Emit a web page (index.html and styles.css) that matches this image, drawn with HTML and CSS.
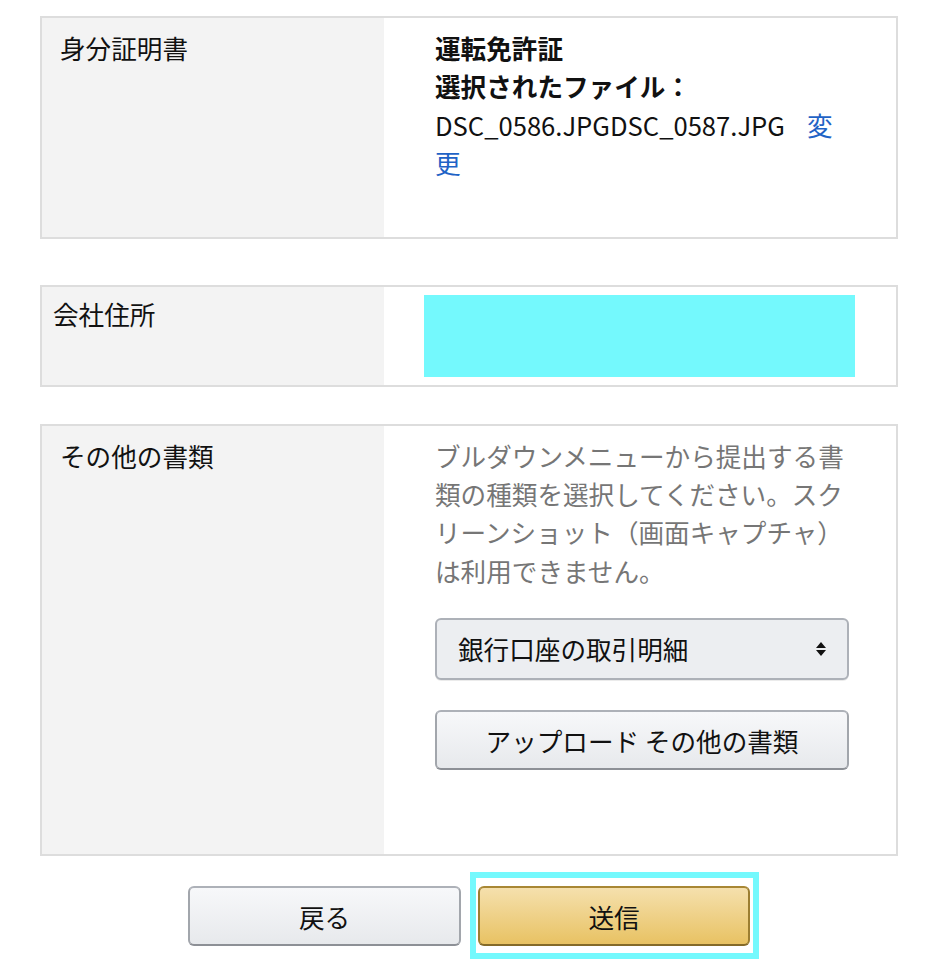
FILE: index.html
```html
<!DOCTYPE html>
<html lang="ja">
<head>
    <meta charset="UTF-8">
    <title>書類の提出</title>
    <link rel="stylesheet" href="styles.css">
</head>
<body>
    <div class="page">
        <div class="panel">
            <div class="label">身分証明書</div>
            <div class="value value-id">
                <div class="strong">運転免許証</div>
                <div class="strong">選択されたファイル：</div>
                <div>DSC_0586.JPGDSC_0587.JPG<a href="#" class="change">変更</a></div>
            </div>
        </div>

        <div class="panel panel-address">
            <div class="label label-tight">会社住所</div>
            <div class="value value-address">
                <div class="redacted"></div>
            </div>
        </div>

        <div class="panel panel-other">
            <div class="label">その他の書類</div>
            <div class="value value-other">
                <p class="help">ブルダウンメニューから提出する書類の種類を選択してください。スクリーンショット（画面キャプチャ）は利用できません。</p>
                <div class="select">
                    <span>銀行口座の取引明細</span>
                    <svg class="arrows" width="12" height="16" viewBox="0 0 12 16">
                        <path d="M6 1 L11 7 H1 Z M6 15 L11 9 H1 Z" fill="#111"/>
                    </svg>
                </div>
                <button class="btn upload">アップロード その他の書類</button>
            </div>
        </div>

        <div class="actions">
            <button class="btn back">戻る</button>
            <span class="marked">
                <button class="btn submit">送信</button>
            </span>
        </div>
    </div>
</body>
</html>
```

FILE: styles.css
```css
body {
    margin: 0;
    font-family: "Noto Sans CJK JP", "Noto Sans", sans-serif;
    font-size: 25.6px;
    line-height: 1.5;
    color: #111;
    background-color: #fff;
}

.page {
    margin: 16px 32px 0 40px;
    padding-bottom: 24px;
}

.panel {
    display: flex;
    border: 2px solid #dddddd;
}

.panel-address {
    margin-top: 46px;
}

.panel-other {
    margin-top: 37px;
}

.label {
    width: 342px;
    flex-shrink: 0;
    box-sizing: border-box;
    background-color: #f3f3f3;
    padding: 11px 18px;
}

.label-tight {
    padding-left: 11px;
    padding-top: 8px;
}

.value {
    flex: 1;
    padding: 11px 47px 0 51px;
}

.value-id {
    padding-bottom: 54px;
}

.strong {
    font-weight: bold;
}

.change {
    color: #1f63c6;
    text-decoration: none;
    margin-left: 22px;
}

.value-address {
    padding: 8px 42px 8px 40px;
}

.redacted {
    width: 431px;
    height: 82px;
    background-color: #74f9fd;
}

.value-other {
    padding-bottom: 84px;
}

.help {
    margin: 0;
    padding-right: 4px;
    color: #767676;
}

.select {
    margin-top: 28px;
    height: 62px;
    box-sizing: border-box;
    display: flex;
    align-items: center;
    justify-content: space-between;
    padding: 0 20px 0 21px;
    background-color: #eceef1;
    border: 2px solid #adb1b8;
    border-radius: 6px;
    box-shadow: 0 1px 0 rgba(0, 0, 0, 0.08);
}

.arrows {
    display: block;
}

.btn {
    display: block;
    font-family: inherit;
    font-size: 25.6px;
    color: #111;
    height: 60px;
    padding: 0;
    border: 2px solid;
    border-radius: 6px;
    cursor: pointer;
    background: linear-gradient(to bottom, #f7f8fa, #e7e9ec);
    border-color: #adb1b8 #a2a6ac #8d9096;
}

.upload {
    width: 100%;
    margin-top: 30px;
}

.actions {
    display: flex;
    justify-content: center;
    gap: 17px;
    margin-top: 30px;
}

.back {
    width: 273px;
}

.submit {
    width: 272px;
    background: linear-gradient(to bottom, #f5e0ad, #e8c263);
    border-color: #a88734 #9c7e31 #846a29;
}

.marked {
    position: relative;
    display: block;
}

.marked::after {
    content: "";
    position: absolute;
    top: -14px;
    left: -8px;
    right: -9px;
    bottom: -13px;
    border: 6px solid #74f9fd;
    pointer-events: none;
}
```
